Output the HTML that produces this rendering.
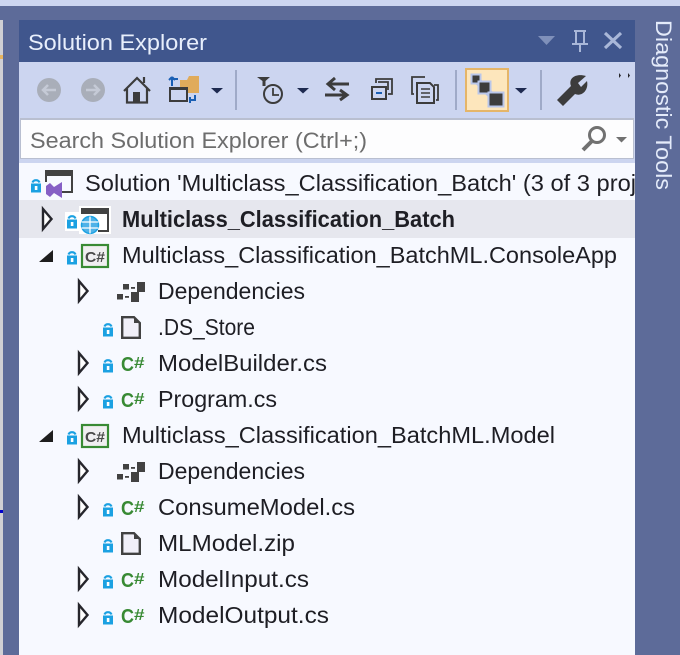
<!DOCTYPE html>
<html><head><meta charset="utf-8"><style>
html,body{margin:0;padding:0;background:#5d6b99;width:680px;height:655px;overflow:hidden}
svg{display:block;filter:blur(0.35px)}
text{font-family:"Liberation Sans",sans-serif}
.t{font-size:23px;fill:#1e1e24}
</style></head><body>
<svg width="680" height="655" viewBox="0 0 680 655" xmlns="http://www.w3.org/2000/svg">
<defs>
<g id="lock"><path d="M1.500 4.500 a3.800 3.800 0 0 1 7 0" fill="none" stroke="#1ba1e2" stroke-width="2.200"/><rect x="0" y="5.500" width="10" height="9" fill="#1ba1e2"/><rect x="3.800" y="8" width="2.600" height="4" fill="#fff"/></g>
<path id="tri" d="M1 -10 L9.500 0 L1 10 Z" fill="#fff" stroke="#26262c" stroke-width="2.400"/>
<path id="exp" d="M14 0 V12 H0 Z" fill="#1e1e1e"/>
<g id="cs"><text x="0" y="14" font-size="20" font-weight="bold" style="fill:#388a34" textLength="13" lengthAdjust="spacingAndGlyphs">C</text><text x="13" y="11" font-size="16" font-weight="bold" style="fill:#388a34" textLength="10.500" lengthAdjust="spacingAndGlyphs">#</text></g>
<g id="proj"><rect x="1" y="1" width="26" height="22" fill="#f0eff1" stroke="#388a34" stroke-width="2.200"/><text x="4" y="18" font-size="15" font-weight="bold" style="fill:#4a4a4a" textLength="20" lengthAdjust="spacingAndGlyphs">C#</text></g>
<g id="file"><path d="M1.200 1.200 H13 L18.800 7 V21.800 H1.200 Z" fill="#f0eff8" stroke="#424242" stroke-width="2.400"/><path d="M13 1 L19 7 H13 Z" fill="#424242"/></g>
<g id="dep" fill="#424242"><rect x="6" y="-7" width="6" height="5.500"/><rect x="20" y="-9" width="8" height="10"/><rect x="0" y="3" width="6" height="5.500"/><rect x="14" y="1" width="8" height="10"/><rect x="14" y="-4" width="4" height="1.800"/><rect x="8" y="5" width="4" height="1.800"/></g>
<path id="dd" d="M0 0 H12 L6 5.500 Z" fill="#1e2a50"/>
</defs>

<!-- frame -->
<rect width="680" height="655" fill="#5d6b99"/>
<rect width="680" height="6" fill="#ccd5f0"/>
<rect x="0" y="6" width="3" height="649" fill="#d0d0d4"/>
<rect x="0" y="6" width="19" height="14" fill="#5d6b99"/>
<rect x="0" y="510" width="3" height="3" fill="#0000cc"/>
<rect x="0" y="55" width="3" height="4" fill="#e8b560"/>

<!-- title -->
<rect x="19" y="20" width="616" height="42" fill="#40568d"/>
<text x="28" y="50" font-size="22.500" style="fill:#e8effc" textLength="179" lengthAdjust="spacingAndGlyphs">Solution Explorer</text>
<path d="M538 36 H555 L546.500 45 Z" fill="#7f90ba"/>
<path d="M574 31 H586 M576 31 V44 H584 V31 M572 44 H588 M580 44 V52" fill="none" stroke="#a9b7d8" stroke-width="2"/>
<path d="M605 33 L621 48 M621 33 L605 48" stroke="#a9b7d8" stroke-width="3.200"/>

<!-- toolbar -->
<rect x="19" y="62" width="616" height="101" fill="#ccd5f0"/>
<circle cx="49" cy="90" r="12" fill="#a9aeb9"/><path d="M56 90 H43 M48 85 L43 90 L48 95" fill="none" stroke="#c5cad6" stroke-width="2.500"/>
<circle cx="93" cy="90" r="12" fill="#a9aeb9"/><path d="M86 90 H99 M94 85 L99 90 L94 95" fill="none" stroke="#c5cad6" stroke-width="2.500"/>
<path d="M124 91 L137 78 L150 91 M127 88 V102.500 H147 V88 M144 83 V77" fill="none" stroke="#3c3c3c" stroke-width="2.200"/><rect x="133" y="92" width="7" height="10" fill="#3c3c3c"/>
<path d="M180 80 H187 L189 76 H199 V93 H180 Z" fill="#e0ab5b"/>
<rect x="170" y="88" width="17" height="13" fill="#ccd5f0" stroke="#3c3c3c" stroke-width="2"/><rect x="170" y="87" width="17" height="3" fill="#3c3c3c"/>
<path d="M172 86 V79 H178 M172 77 L175 80 M172 77 L169 80" fill="none" stroke="#1a5fb4" stroke-width="2"/>
<path d="M195 95 V100 H190 M190 97 L190 103" fill="none" stroke="#1a5fb4" stroke-width="2"/>
<use href="#dd" x="211" y="88"/>
<rect x="235" y="70" width="2" height="40" fill="#9faac8"/>
<path d="M257 77 H270 L265.500 81 V86 H262.500 V81 Z" fill="#3c3c3c"/>
<circle cx="273" cy="94" r="9" fill="none" stroke="#3c3c3c" stroke-width="2"/><path d="M273 88 V95 H279" fill="none" stroke="#3c3c3c" stroke-width="1.800"/>
<use href="#dd" x="297" y="88"/>
<path d="M349 84 H329 M335 78 L328 84 L335 90" fill="none" stroke="#3c3c3c" stroke-width="3"/>
<path d="M325 95 H345 M340 90 L347 95 L340 100" fill="none" stroke="#3c3c3c" stroke-width="3"/>
<path d="M376 83 V79 H392 V94 H388" fill="none" stroke="#3c3c3c" stroke-width="1.800"/>
<rect x="372" y="87" width="14" height="12" fill="#ccd5f0" stroke="#3c3c3c" stroke-width="2"/>
<rect x="376" y="92" width="6" height="2" fill="#1a5fb4"/>
<path d="M378 82 H388 V90" fill="none" stroke="#3c3c3c" stroke-width="1.800"/>
<path d="M414 94 H412 V77 H425 M434 85 H438 V100 H436" fill="none" stroke="#3c3c3c" stroke-width="1.800"/>
<path d="M417 83 H430 L434 87 V103 H417 Z" fill="#ccd5f0" stroke="#3c3c3c" stroke-width="2"/>
<path d="M421 89 H430 M421 93 H430 M421 97 H430" stroke="#3c3c3c" stroke-width="1.600"/>
<rect x="455" y="70" width="2" height="40" fill="#9faac8"/>
<rect x="466" y="69" width="42" height="42" fill="#fde6bc" stroke="#e5b568" stroke-width="2"/>
<path d="M476 79 L484 88 L496 100" fill="none" stroke="#b9c6ea" stroke-width="7"/>
<rect x="471.500" y="74.500" width="9" height="9" fill="#3c3c3c" stroke="#b9c6ea" stroke-width="2"/><rect x="478.500" y="81.500" width="12" height="12" fill="#3c3c3c" stroke="#b9c6ea" stroke-width="2"/><rect x="488.500" y="92.500" width="15" height="14" fill="#3c3c3c" stroke="#b9c6ea" stroke-width="2"/>
<use href="#dd" x="515" y="88"/>
<rect x="540" y="70" width="2" height="40" fill="#9faac8"/>
<path d="M557 100 L571 86 C568 78 576 73 586 76 L578 83 L581 87 L587 81 C589 90 582 97 575 94 L563 106 Z" fill="#3c3c3c"/>
<path d="M619 73 L621 75.500 L619 78 Z M628 73 L630 75.500 L628 78 Z" fill="#26262c"/>

<!-- search -->
<rect x="20" y="118" width="614" height="41" fill="#b9bfd0"/>
<rect x="21" y="120" width="612" height="38" fill="#fdfdfe"/>
<text x="30" y="148" font-size="22.500" style="fill:#6d6d6d" textLength="337" lengthAdjust="spacingAndGlyphs">Search Solution Explorer (Ctrl+;)</text>
<circle cx="597" cy="135" r="7.500" fill="none" stroke="#717171" stroke-width="3"/>
<path d="M592 141 L583 150" stroke="#717171" stroke-width="4"/>
<path d="M616 137 H627 L621.500 142.500 Z" fill="#717171"/>

<!-- tree -->
<rect x="19" y="163" width="616" height="492" fill="#f7f9ff"/>
<rect x="19" y="200" width="616" height="38" fill="#e6e7ee"/>

<!-- row 1 -->
<use href="#lock" x="31" y="178"/>
<path d="M46 173 H72 V192 H62" fill="none" stroke="#424242" stroke-width="2"/><rect x="45" y="170" width="28" height="6" fill="#424242"/><path d="M46 173 V182" stroke="#424242" stroke-width="2"/>
<path d="M46 186 L50 183 L54 187 L62 182 V198 L54 193 L50 197 L46 194 Z" fill="#865fc5"/>
<text class="t" x="85" y="191" textLength="551" lengthAdjust="spacingAndGlyphs">Solution 'Multiclass_Classification_Batch' (3 of 3 proj</text>

<!-- row 2 -->
<use href="#tri" x="42" y="219"/>
<rect x="65" y="212" width="14" height="19" fill="#fff"/>
<use href="#lock" x="67" y="214"/>
<rect x="79" y="206" width="32" height="28" fill="#fff"/>
<rect x="81" y="208" width="28" height="6" fill="#424242"/><path d="M108 212 V231 H98" fill="none" stroke="#424242" stroke-width="2"/>
<circle cx="90" cy="225" r="9.500" fill="#fff"/><circle cx="90" cy="225" r="8.500" fill="#4fb2e8" stroke="#1ba1e2" stroke-width="1.500"/>
<path d="M81.500 222 H98.500 M81.500 228 H98.500 M90 216.500 V233.500" stroke="#fff" stroke-width="1.300"/>
<text class="t" x="122" y="227" font-weight="bold" textLength="333" lengthAdjust="spacingAndGlyphs">Multiclass_Classification_Batch</text>

<!-- row 3 -->
<use href="#exp" x="39" y="250"/>
<use href="#lock" x="67" y="250"/>
<use href="#proj" x="81" y="244"/>
<text class="t" x="122" y="263" textLength="495" lengthAdjust="spacingAndGlyphs">Multiclass_Classification_BatchML.ConsoleApp</text>

<!-- row 4 -->
<use href="#tri" x="78" y="291"/>
<use href="#dep" x="117" y="291"/>
<text class="t" x="158" y="299" textLength="147" lengthAdjust="spacingAndGlyphs">Dependencies</text>

<!-- row 5 -->
<use href="#lock" x="103" y="322"/>
<use href="#file" x="121" y="316"/>
<text class="t" x="158" y="335" textLength="97" lengthAdjust="spacingAndGlyphs">.DS_Store</text>

<!-- row 6 -->
<use href="#tri" x="78" y="363"/>
<use href="#lock" x="103" y="358"/>
<use href="#cs" x="121" y="357"/>
<text class="t" x="158" y="371" textLength="169" lengthAdjust="spacingAndGlyphs">ModelBuilder.cs</text>

<!-- row 7 -->
<use href="#tri" x="78" y="399"/>
<use href="#lock" x="103" y="394"/>
<use href="#cs" x="121" y="393"/>
<text class="t" x="158" y="407" textLength="119" lengthAdjust="spacingAndGlyphs">Program.cs</text>

<!-- row 8 -->
<use href="#exp" x="39" y="430"/>
<use href="#lock" x="67" y="430"/>
<use href="#proj" x="81" y="424"/>
<text class="t" x="122" y="443" textLength="433" lengthAdjust="spacingAndGlyphs">Multiclass_Classification_BatchML.Model</text>

<!-- row 9 -->
<use href="#tri" x="78" y="471"/>
<use href="#dep" x="117" y="471"/>
<text class="t" x="158" y="479" textLength="147" lengthAdjust="spacingAndGlyphs">Dependencies</text>

<!-- row 10 -->
<use href="#tri" x="78" y="507"/>
<use href="#lock" x="103" y="502"/>
<use href="#cs" x="121" y="501"/>
<text class="t" x="158" y="515" textLength="197" lengthAdjust="spacingAndGlyphs">ConsumeModel.cs</text>

<!-- row 11 -->
<use href="#lock" x="103" y="538"/>
<use href="#file" x="121" y="532"/>
<text class="t" x="158" y="551" textLength="137" lengthAdjust="spacingAndGlyphs">MLModel.zip</text>

<!-- row 12 -->
<use href="#tri" x="78" y="579"/>
<use href="#lock" x="103" y="574"/>
<use href="#cs" x="121" y="573"/>
<text class="t" x="158" y="587" textLength="151" lengthAdjust="spacingAndGlyphs">ModelInput.cs</text>

<!-- row 13 -->
<use href="#tri" x="78" y="615"/>
<use href="#lock" x="103" y="610"/>
<use href="#cs" x="121" y="609"/>
<text class="t" x="158" y="623" textLength="171" lengthAdjust="spacingAndGlyphs">ModelOutput.cs</text>

<!-- diagnostic -->
<text transform="translate(656,20) rotate(90)" font-size="22" style="fill:#e4ebfa" textLength="170" lengthAdjust="spacingAndGlyphs">Diagnostic Tools</text>
</svg>
</body></html>
